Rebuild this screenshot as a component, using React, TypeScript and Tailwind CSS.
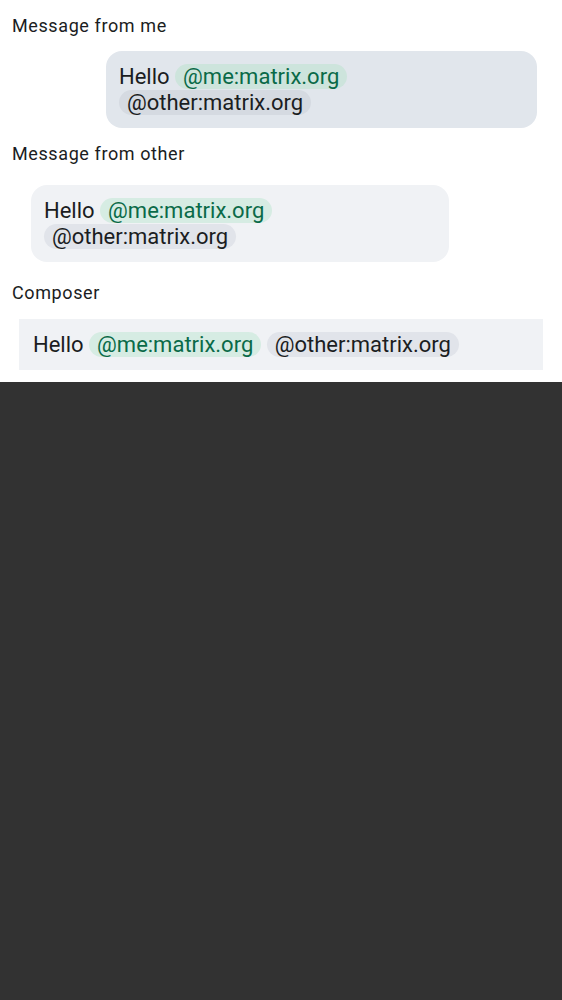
const FONT = "font-['Roboto','Liberation_Sans',sans-serif]";

function Pill({ me, onMe, children }: { me?: boolean; onMe?: boolean; children: string }) {
  const cls = me
    ? onMe
      ? "bg-[#cde4dc] text-[#0a6a48]"
      : "bg-[#d6ece3] text-[#0a6a48]"
    : onMe
      ? "bg-[#d5dae1] text-[#1b1d22]"
      : "bg-[#e1e4ea] text-[#1b1d22]";
  return <span className={`rounded-full px-2 ${cls}`}>{children}</span>;
}

function Label({ children, className = "" }: { children: string; className?: string }) {
  return (
    <div className={`text-[18px] leading-5 tracking-[0.6px] text-[#1b1d22] ${className}`}>
      {children}
    </div>
  );
}

export default function App() {
  return (
    <div className={`min-h-screen bg-[#323232] ${FONT}`}>
      <div className="flex flex-col bg-white px-3 pb-3 pt-4">
        <Label>Message from me</Label>
        <div className="mt-[15px] flex justify-end pr-[13px]">
          <div className="w-[431px] rounded-2xl bg-[#e1e6ec] px-[13px] pb-3 pt-[13px] text-[22px] leading-[26px] text-[#1b1d22]">
            Hello <Pill me onMe>@me:matrix.org</Pill> <Pill onMe>@other:matrix.org</Pill>
          </div>
        </div>
        <Label className="mt-4">Message from other</Label>
        <div className="mt-[21px] pl-[19px]">
          <div className="w-[418px] rounded-2xl bg-[#f0f2f5] px-[13px] pb-3 pt-[13px] text-[22px] leading-[26px] text-[#1b1d22]">
            Hello <Pill me>@me:matrix.org</Pill> <Pill>@other:matrix.org</Pill>
          </div>
        </div>
        <Label className="mt-[21px]">Composer</Label>
        <div className="mt-4 px-[7px]">
          <div className="flex h-[51px] items-center bg-[#f0f2f5] px-[14px] text-[22px] leading-[26px] text-[#1b1d22]">
            <span className="whitespace-pre">
              Hello <Pill me>@me:matrix.org</Pill> <Pill>@other:matrix.org</Pill>
            </span>
          </div>
        </div>
      </div>
    </div>
  );
}
